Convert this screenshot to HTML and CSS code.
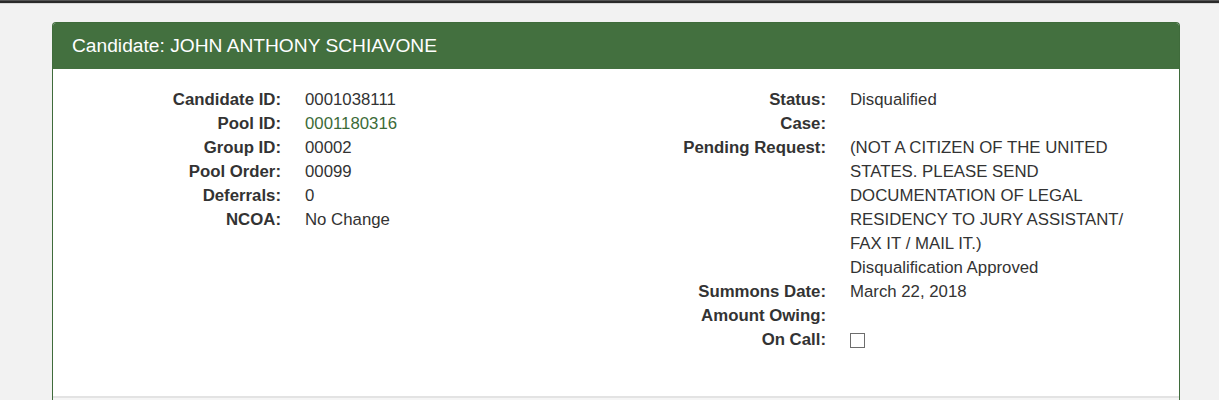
FILE: index.html
```html
<!DOCTYPE html>
<html>
<head>
<meta charset="utf-8">
<link rel="stylesheet" href="styles.css">
</head>
<body>
<div class="topbar"></div>
<div class="page">
  <div class="panel">
    <div class="panel-heading">Candidate: JOHN ANTHONY SCHIAVONE</div>
    <div class="panel-body">
      <dl class="col col-left">
        <dt>Candidate ID:</dt><dd>0001038111</dd>
        <dt>Pool ID:</dt><dd class="link">0001180316</dd>
        <dt>Group ID:</dt><dd>00002</dd>
        <dt>Pool Order:</dt><dd>00099</dd>
        <dt>Deferrals:</dt><dd>0</dd>
        <dt>NCOA:</dt><dd>No Change</dd>
      </dl>
      <dl class="col col-right">
        <dt>Status:</dt><dd>Disqualified</dd>
        <dt>Case:</dt><dd></dd>
        <dt>Pending Request:</dt><dd>(NOT A CITIZEN OF THE UNITED STATES. PLEASE SEND DOCUMENTATION OF LEGAL RESIDENCY TO JURY ASSISTANT/ FAX IT / MAIL IT.)<br>Disqualification Approved</dd>
        <dt>Summons Date:</dt><dd>March 22, 2018</dd>
        <dt>Amount Owing:</dt><dd></dd>
        <dt>On Call:</dt><dd><span class="checkbox"></span></dd>
      </dl>
    </div>
    <div class="panel-footer"></div>
  </div>
</div>
</body>
</html>
```
FILE: styles.css
```css
html, body {
  margin: 0;
  padding: 0;
  background: #f2f2f2;
  font-family: "Liberation Sans", Arial, sans-serif;
  font-size: 16.8px;
  color: #333;
}
.topbar {
  background: #2a2a2a;
  border-top: 1px solid #555;
  border-bottom: 1px solid #d8d8d8;
  box-sizing: border-box;
  height: 4px;
}
.page {
  padding: 18px 38px 0 52px;
}
.panel {
  width: 1128px;
  box-sizing: border-box;
  border: 1px solid #3f6b3b;
  border-bottom: none;
  border-radius: 4px 4px 0 0;
  background: #fff;
}
.panel-heading {
  background: #43703f;
  color: #fff;
  font-size: 19.2px;
  height: 46px;
  line-height: 46px;
  padding: 0 19px;
  border-radius: 3px 3px 0 0;
}
.panel-body {
  display: flex;
  padding: 19px 0 0 0;
  height: 327px;
  box-sizing: border-box;
}
.col {
  margin: 0;
  display: grid;
  column-gap: 24px;
  line-height: 24px;
  align-content: start;
}
.col-left {
  width: 563px;
  grid-template-columns: 228px 1fr;
}
.col-right {
  width: 563px;
  grid-template-columns: 210px 296px;
}
dt {
  font-weight: bold;
  text-align: right;
}
dd {
  margin: 0;
  min-height: 24px;
}
.link {
  color: #3c6b38;
}
.checkbox {
  display: inline-block;
  width: 13px;
  height: 13px;
  border: 1px solid #6d6d6d;
  background: #fff;
  vertical-align: middle;
  margin-top: -1px;
}
.panel-footer {
  border-top: 2px solid #e3e3e3;
  height: 20px;
  background: #f5f5f5;
}
```
